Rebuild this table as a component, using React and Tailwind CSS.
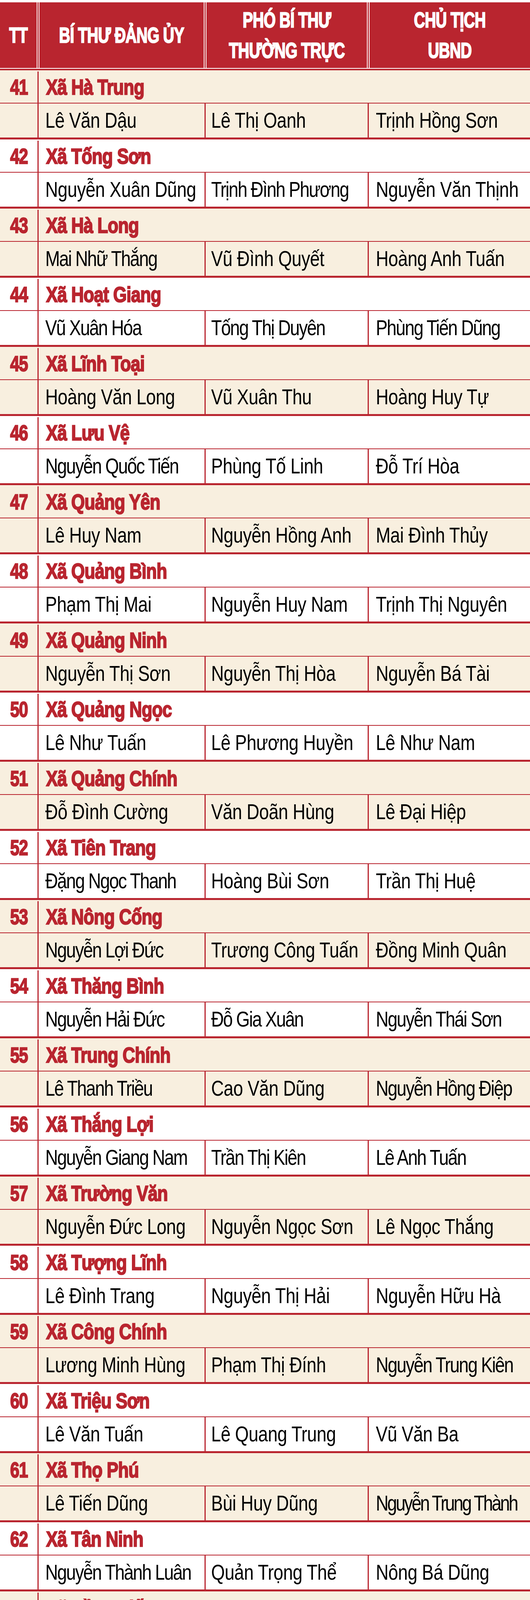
import React from "react";

const communes = [
  [41, "Xã Hà Trung", "Lê Văn Dậu", "Lê Thị Oanh", "Trịnh Hồng Sơn"],
  [42, "Xã Tống Sơn", "Nguyễn Xuân Dũng", "Trịnh Đình Phương", "Nguyễn Văn Thịnh"],
  [43, "Xã Hà Long", "Mai Nhữ Thắng", "Vũ Đình Quyết", "Hoàng Anh Tuấn"],
  [44, "Xã Hoạt Giang", "Vũ Xuân Hóa", "Tống Thị Duyên", "Phùng Tiến Dũng"],
  [45, "Xã Lĩnh Toại", "Hoàng Văn Long", "Vũ Xuân Thu", "Hoàng Huy Tự"],
  [46, "Xã Lưu Vệ", "Nguyễn Quốc Tiến", "Phùng Tố Linh", "Đỗ Trí Hòa"],
  [47, "Xã Quảng Yên", "Lê Huy Nam", "Nguyễn Hồng Anh", "Mai Đình Thủy"],
  [48, "Xã Quảng Bình", "Phạm Thị Mai", "Nguyễn Huy Nam", "Trịnh Thị Nguyên"],
  [49, "Xã Quảng Ninh", "Nguyễn Thị Sơn", "Nguyễn Thị Hòa", "Nguyễn Bá Tài"],
  [50, "Xã Quảng Ngọc", "Lê Như Tuấn", "Lê Phương Huyền", "Lê Như Nam"],
  [51, "Xã Quảng Chính", "Đỗ Đình Cường", "Văn Doãn Hùng", "Lê Đại Hiệp"],
  [52, "Xã Tiên Trang", "Đặng Ngọc Thanh", "Hoàng Bùi Sơn", "Trần Thị Huệ"],
  [53, "Xã Nông Cống", "Nguyễn Lợi Đức", "Trương Công Tuấn", "Đồng Minh Quân"],
  [54, "Xã Thăng Bình", "Nguyễn Hải Đức", "Đỗ Gia Xuân", "Nguyễn Thái Sơn"],
  [55, "Xã Trung Chính", "Lê Thanh Triều", "Cao Văn Dũng", "Nguyễn Hồng Điệp"],
  [56, "Xã Thắng Lợi", "Nguyễn Giang Nam", "Trần Thị Kiên", "Lê Anh Tuấn"],
  [57, "Xã Trường Văn", "Nguyễn Đức Long", "Nguyễn Ngọc Sơn", "Lê Ngọc Thắng"],
  [58, "Xã Tượng Lĩnh", "Lê Đình Trang", "Nguyễn Thị Hải", "Nguyễn Hữu Hà"],
  [59, "Xã Công Chính", "Lương Minh Hùng", "Phạm Thị Đính", "Nguyễn Trung Kiên"],
  [60, "Xã Triệu Sơn", "Lê Văn Tuấn", "Lê Quang Trung", "Vũ Văn Ba"],
  [61, "Xã Thọ Phú", "Lê Tiến Dũng", "Bùi Huy Dũng", "Nguyễn Trung Thành"],
  [62, "Xã Tân Ninh", "Nguyễn Thành Luân", "Quản Trọng Thể", "Nông Bá Dũng"],
  [63, "Xã Đồng Tiến", "Đỗ Hữu Quyết", "Lê Xuân Trường", "Phạm Văn Thường"],
  [64, "Xã Hợp Tiến", "Lê Phú Quốc", "Lê Thị Độ", "Nguyễn Thị Xuân"],
  [65, "Xã Thọ Ngọc", "Lê Thị Sen", "Lê Ngọc Toàn", "Nguyễn Ngọc Quang"],
  [66, "Xã An Nông", "Nguyễn Việt Ba", "Hà Thị Thủy", "Hoàng Vũ Thảo"],
  [67, "Xã Thọ Bình", "Nguyễn Hùng Vương", "Lê Văn Phương", "Hoàng Văn Chung"],
  [68, "Xã Sao Vàng", "Hoàng Văn Đồng", "Phan Thanh Dũng", "Nguyễn Quốc Tuấn"],
  [69, "Xã Thọ Lập", "Nguyễn Trường Sinh", "Lê Văn Lực", "Trịnh Duy Tình"],
  [70, "Xã Thọ Xuân", "Thái Xuân Cường", "Lê Thị Thanh Tâm", "Lê Ngọc Quân"],
  [71, "Xã Xuân Lập", "Lý Đình Sỹ", "Đỗ Kim Thọ", "Hà Đình Cường"],
  [72, "Xã Thọ Long", "Nguyễn Hữu Dũng", "Lê Kiều Anh", "Lưu Thị Anh Đào"],
  [73, "Xã Xuân Hòa", "Phạm Văn Luận", "Nguyễn Thị Bích Phương", "Trịnh Ngọc Giang"],
  [74, "Xã Lam Sơn", "Nguyễn Ngọc Thức", "Phạm Thanh Tùng", "Lê Văn Niệm"],
  [75, "Xã Xuân Tín", "Nguyễn Xuân Hải", "Trịnh Ngọc Tấn", "Vũ Văn Đông"],
  [76, "Xã Thiệu Hóa", "Nguyễn Văn Biện", "Lê Minh Sơn", "Nguyễn Ngọc Hiểu"],
  [77, "Xã Thiệu Trung", "Đỗ Thế Bằng", "Nguyễn Văn Phúc", "Trịnh Đình Tùng"],
  [78, "Xã Thiệu Toán", "Đỗ Ngọc Luân", "Bùi Trung Hiếu", "Trịnh Đức Hùng"],
  [79, "Xã Thiệu Tiến", "Lê Viết Chí", "Nguyễn Thị Thu", "Phan Anh Tiến"],
];

const tight = new Set([
  "Trịnh Đình Phương", "Mai Nhữ Thắng", "Vũ Xuân Hóa", "Tống Thị Duyên", "Phùng Tiến Dũng",
  "Nguyễn Quốc Tiến", "Đặng Ngọc Thanh", "Nguyễn Lợi Đức", "Nguyễn Hải Đức", "Đỗ Gia Xuân",
  "Nguyễn Thái Sơn", "Lê Thanh Triều", "Nguyễn Hồng Điệp", "Nguyễn Giang Nam", "Trần Thị Kiên",
  "Lê Anh Tuấn", "Nguyễn Trung Kiên", "Nguyễn Thành Luân", "Lê Phú Quốc", "Nguyễn Việt Ba",
  "Hà Thị Thủy", "Hoàng Vũ Thảo", "Nguyễn Hùng Vương", "Hoàng Văn Đồng", "Phan Thanh Dũng",
  "Nguyễn Quốc Tuấn", "Nguyễn Trường Sinh", "Lê Văn Lực", "Nguyễn Ngọc Hiểu", "Đỗ Thế Bằng",
]);
const tighter = new Set(["Nguyễn Trung Thành", "Nguyễn Ngọc Quang"]);

const RedLine = ({ className = "" }) => <div className={`bg-[#b9252f] ${className}`} />;

const HeadDivider = () => (
  <div className="w-[7px] shrink-0 border-x-2 border-white bg-[#b9252f]" />
);

const HeadCell = ({ className = "", children }) => (
  <div className={`flex items-center justify-center whitespace-nowrap text-center ${className}`}>
    <span className="inline-block scale-x-[0.71] text-[56px] leading-[78px] font-bold tracking-[-0.02em] text-white [-webkit-text-stroke:2.5px_#fff]">
      {children}
    </span>
  </div>
);

const NameCell = ({ name, className = "" }) => {
  const squeeze = name === "Nguyễn Thị Bích Phương";
  const track = tighter.has(name)
    ? "tracking-[-0.075em]"
    : tight.has(name)
    ? "tracking-[-0.045em]"
    : "tracking-[-0.01em]";
  return (
    <div className={`flex items-center overflow-hidden whitespace-nowrap ${className}`}>
      <span
        className={`inline-block origin-left text-[55px] leading-none text-black ${track} ${
          squeeze ? "scale-x-[0.65]" : "scale-x-[0.82]"
        }`}
      >
        {name}
      </span>
    </div>
  );
};

const Entry = ({ row }) => {
  const [no, commune, secretary, deputy, chairman] = row;
  const bg = no % 2 === 1 ? "bg-[#f8efdf]" : "bg-white";
  return (
    <div className={bg}>
      {/* commune title */}
      <div className="flex h-[83px]">
        <div className="flex w-[96px] shrink-0 items-center justify-center pt-[3px]">
          <span className="inline-block scale-x-[0.76] text-[56px] leading-none font-bold tracking-[-0.03em] text-[#b9252f] [-webkit-text-stroke:2.5px_#b9252f]">
            {no}
          </span>
        </div>
        <RedLine className="mt-[3px] w-[3px] shrink-0" />
        <div className="flex flex-1 items-center whitespace-nowrap pt-[3px] pl-[19px]">
          <span className="inline-block origin-left scale-x-[0.8] text-[56px] leading-none font-bold tracking-[-0.02em] text-[#b9252f] [-webkit-text-stroke:2.5px_#b9252f]">
            {commune}
          </span>
        </div>
      </div>
      <RedLine className="h-[2px]" />
      {/* names */}
      <div className="flex h-[87px]">
        <div className="w-[96px] shrink-0" />
        <RedLine className="w-[3px] shrink-0" />
        <NameCell name={secretary} className="w-[425px] shrink-0 pl-[17px]" />
        <RedLine className="w-[3px] shrink-0" />
        <NameCell name={deputy} className="w-[415px] shrink-0 pl-[14px]" />
        <RedLine className="w-[3px] shrink-0" />
        <NameCell name={chairman} className="min-w-0 flex-1 pl-[18px]" />
      </div>
      <RedLine className="h-[5px]" />
    </div>
  );
};

export default function App() {
  return (
    <div className="h-[7090px] w-[1358px] overflow-hidden bg-white font-['Liberation_Sans',Arial,sans-serif]">
      {/* table header */}
      <div className="pt-[6px]">
        <div className="flex h-[168px] bg-[#b9252f]">
          <HeadCell className="w-[94px] shrink-0">TT</HeadCell>
          <HeadDivider />
          <HeadCell className="w-[421px] shrink-0">BÍ THƯ ĐẢNG ỦY</HeadCell>
          <HeadDivider />
          <HeadCell className="w-[411px] shrink-0">
            PHÓ BÍ THƯ
            <br />
            THƯỜNG TRỰC
          </HeadCell>
          <HeadDivider />
          <HeadCell className="min-w-0 flex-1">
            CHỦ TỊCH
            <br />
            UBND
          </HeadCell>
        </div>
        <div className="h-[2px] bg-white" />
        <RedLine className="h-[4px]" />
      </div>

      {communes.map((row) => (
        <Entry key={row[0]} row={row} />
      ))}
    </div>
  );
}
